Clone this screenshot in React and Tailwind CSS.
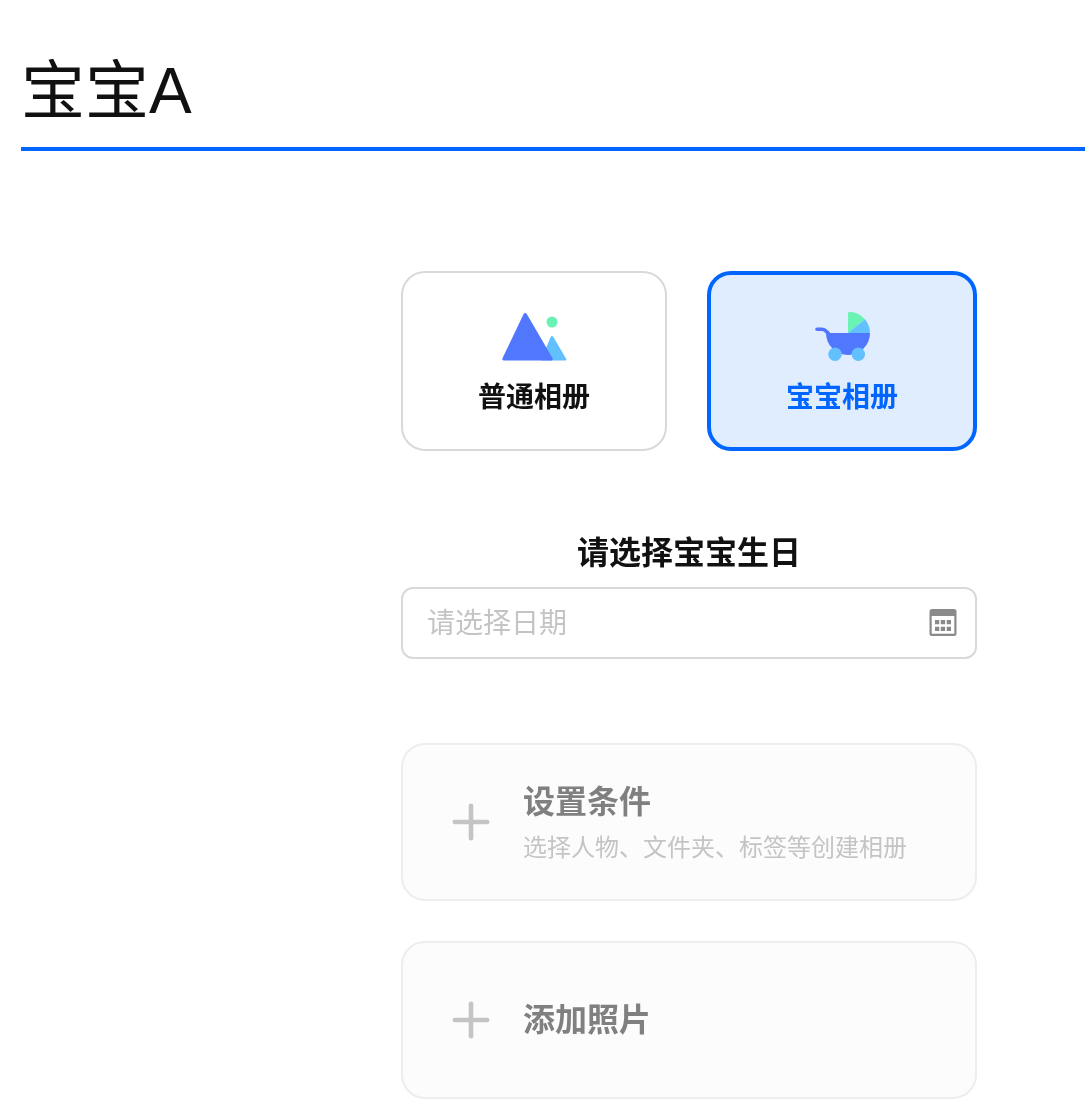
import React from "react";

const FONT = "font-['Liberation_Sans','Noto_Sans_CJK_SC',sans-serif]";

function MountainIcon() {
  return (
    <svg width="66" height="50" viewBox="0 0 66 50">
      <path d="M40 49.5 L49.6 26 Q51 24 52.4 26 L65 47.5 Q66 49.5 64 49.5 Z" fill="#62c0ff" />
      <path d="M22.6 3 Q24.2 0.8 25.8 3 L51.4 47 Q52.4 49.5 50 49.5 L3 49.5 Q0.8 49.5 1.6 47 Z" fill="#5277ff" />
      <circle cx="51" cy="11" r="5.5" fill="#6af3b4" />
    </svg>
  );
}

function StrollerIcon() {
  return (
    <svg width="58" height="50" viewBox="0 0 58 50">
      <path d="M35 22 L35 2.5 Q35 0.6 37 0.8 Q46 1.8 52 8.2 Z" fill="#6af3b4" />
      <path d="M35 22 L52 8.2 Q57 14.5 57 22 Z" fill="#62c0ff" />
      <path d="M4 18.3 L9 18.3 Q11.5 18.3 13.5 20.5 L15.5 22.5" fill="none" stroke="#5277ff" strokeWidth="3.6" strokeLinecap="round" />
      <path d="M13 22 L57 22 A22 22 0 0 1 13 22 Z" fill="#5277ff" />
      <circle cx="22" cy="43.3" r="6.7" fill="#62c0ff" />
      <circle cx="45.3" cy="43.3" r="6.7" fill="#62c0ff" />
    </svg>
  );
}

function CalendarIcon() {
  return (
    <svg width="28" height="28" viewBox="0 0 28 28">
      <rect x="0.5" y="0" width="27" height="27" rx="2.5" fill="#8a8a8a" />
      <rect x="2.7" y="7" width="22.6" height="17.7" fill="#ffffff" />
      <path d="M6 11h4.3v4.3H6zM11.8 11h4.3v4.3h-4.3zM17.7 11H22v4.3h-4.3zM6 17.7h4.3V22H6zM11.8 17.7h4.3V22h-4.3zM17.7 17.7H22V22h-4.3z" fill="#8a8a8a" />
    </svg>
  );
}

function PlusIcon() {
  return (
    <svg width="40" height="40" viewBox="0 0 40 40">
      <path d="M3.8 20h32.4M20 3.8v32.4" stroke="#c4c4c4" strokeWidth="4.6" strokeLinecap="round" />
    </svg>
  );
}

function TypeCard({ icon, label, active }) {
  return (
    <div
      className={
        active
          ? "w-[270px] h-[180px] rounded-[24px] border-[4px] border-[#0066ff] bg-[#e0edff] flex flex-col items-center pt-[36px]"
          : "w-[266px] h-[180px] rounded-[24px] border-2 border-[#d9d9d9] bg-white flex flex-col items-center pt-[38px]"
      }
    >
      <div className="h-[50px] flex items-center justify-center">{icon}</div>
      <div className={active ? "mt-[16px] text-[28px] leading-[42px] font-bold text-[#0066ff]" : "mt-[16px] text-[28px] leading-[42px] font-bold text-[#111111]"}>
        {label}
      </div>
    </div>
  );
}

function AddCard({ title, desc }) {
  return (
    <div className="h-[158px] rounded-[24px] border-2 border-[#ededed] bg-[#fcfcfc] flex items-center pl-[48px]">
      <PlusIcon />
      <div className="ml-[32px]">
        <div className="text-[32px] leading-[48px] font-bold text-[#808080]">{title}</div>
        {desc && <div className="text-[24px] leading-[36px] mt-[4px] text-[#c4c4c4]">{desc}</div>}
      </div>
    </div>
  );
}

export default function App() {
  return (
    <div className={`${FONT} w-[1085px] h-[1114px] overflow-hidden will-change-transform`}>
      <div className="ml-[21px] h-[151px] border-b-[4px] border-[#0066ff] pt-[43px]">
        <div className="text-[64px] leading-[96px] text-[#111111]">宝宝A</div>
      </div>

      <div className="ml-[401px] w-[576px] pt-[120px]">
        <div className="flex justify-between">
          <TypeCard icon={<MountainIcon />} label="普通相册" />
          <TypeCard icon={<StrollerIcon />} label="宝宝相册" active />
        </div>

        <div className="mt-[78px] text-center text-[32px] leading-[48px] font-bold text-[#111111]">请选择宝宝生日</div>
        <div className="mt-[10px] h-[72px] rounded-[12px] border-2 border-[#d9d9d9] flex items-center justify-between pl-[24px] pr-[18px]">
          <span className="pt-[1px] text-[28px] text-[#c4c4c4]">请选择日期</span>
          <span className="flex"><CalendarIcon /></span>
        </div>

        <div className="mt-[84px] flex flex-col gap-[40px]">
          <AddCard title="设置条件" desc="选择人物、文件夹、标签等创建相册" />
          <AddCard title="添加照片" />
        </div>
      </div>
    </div>
  );
}
